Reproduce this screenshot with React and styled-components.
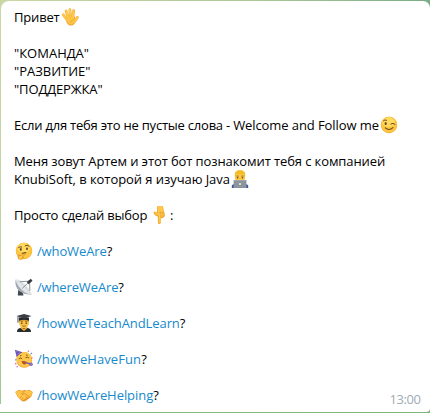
import React from "react";
import styled, { createGlobalStyle } from "styled-components";

const GlobalStyle = createGlobalStyle`
  * { box-sizing: border-box; }
  body { margin: 0; overflow: hidden; }
`;

const Chat = styled.main`
  width: 430px;
  height: 413px;
  padding: 1px 0 1px 1px;
  background:
    linear-gradient(to right, #8fbb8a, #80b37e) bottom / 100% 5px no-repeat,
    linear-gradient(to right, #cbd6a6, #abc796 60%, #78ad86) top / 100% 9px no-repeat,
    linear-gradient(#cbd7a8, #c0d3a5 65%, #9cc491);
`;

const Bubble = styled.article`
  position: relative;
  height: 411px;
  padding: 7px 10px 0 13px;
  border-radius: 8px 7px 4px 0;
  background: #fff;
  color: #000;
  font: 13px/18px "Open Sans", "Noto Sans", sans-serif;

  &::after {
    content: "";
    position: absolute;
    left: -1px;
    bottom: 0;
    width: 1px;
    height: 8px;
    background: #fff;
  }
`;

const Line = styled.p`
  margin: 0;
  height: 18px;
  white-space: pre;
  letter-spacing: ${(p) => p.$track || 0}px;
`;

const Phrase = styled.span`
  letter-spacing: ${(p) => p.$track || 0}px;
`;

const Paragraph = styled.section`
  margin-bottom: 18px;
`;

const Command = styled.a`
  color: #168acd;
  text-decoration: none;
  letter-spacing: ${(p) => p.$track || 0}px;
`;

const Time = styled.time`
  position: absolute;
  right: 9.5px;
  bottom: 4px;
  color: #a0acb6;
  font-size: 13px;
  line-height: 18px;
  letter-spacing: -0.45px;
`;

const Glyph = styled.svg`
  width: 18px;
  height: 18px;
  margin: 0 0.5px 0 1px;
  vertical-align: top;
  overflow: visible;
`;

const Face = () => (
  <>
    <circle cx="9" cy="9" r="8.2" fill="#f5a52e" />
    <circle cx="9" cy="8.6" r="7.9" fill="#fbc640" />
    <ellipse cx="8.5" cy="6.2" rx="6.2" ry="4.7" fill="#ffdc60" />
  </>
);

const drawings = {
  hand: (
    <>
      <path d="M5 9.5 13 7.5 14.8 11Q14.4 17.8 9.6 17.6 6.8 17.3 5.2 13.5Z" fill="#f0a530" />
      <g fill="none" stroke="#efa531" strokeWidth="2.7" strokeLinecap="round">
        <path d="M5.8 11.5 2.2 6.8M7.3 9.5 5 3M9.5 9 8.9 1.6M11.7 9.5 12.7 2.6M13.3 13.8 16.4 9.4" />
      </g>
      <g fill="none" stroke="#ffc94a" strokeWidth="2" strokeLinecap="round">
        <path d="M5.8 11.5 2.3 6.9M7.3 9.5 5.1 3.1M9.5 9 8.9 1.7M11.7 9.5 12.6 2.7M12.8 13.8 16.2 9.6" />
      </g>
      <path d="M5.4 10 12.7 8.6 13.6 12Q12.8 16.7 9.6 16.5 7 16 5.4 12Z" fill="#ffc646" />
      <path d="M9.4 14.8Q10 12 12.8 11.8" stroke="#e99c29" fill="none" strokeWidth=".7" />
    </>
  ),
  wink: (
    <>
      <Face />
      <g fill="none" stroke="#74451d" strokeLinecap="round">
        <path d="M3.4 4.8Q4.8 3.2 6.6 4.2M10.8 8Q13 6.4 15 8.2" strokeWidth="1" />
        <path d="M5.3 11.8Q9 15.2 13 11.6" strokeWidth="1.1" />
      </g>
      <ellipse cx="5.7" cy="7.6" rx="1.1" ry="1.5" fill="#74451d" />
    </>
  ),
  coder: (
    <>
      <path d="M.8 18v-2.2q.2-1.3 1.9-1.6h12.6q1.6.3 1.9 1.6V18Z" fill="#3956a8" />
      <path d="M4 9V4Q4.4.4 9 .3T14 4v5Q13.2 13 9 13T4 9Z" fill="#fac745" />
      <path d="M3.8 7V3.8Q4.5.2 9 .2t5.2 3.6V7L12.6 4H5.4Z" fill="#f3bd28" />
      <path d="M5.3 6.1h2.3M10.4 6.1h2.3" stroke="#9a671c" strokeWidth=".9" />
      <circle cx="6.6" cy="7.8" r=".8" fill="#63421b" />
      <circle cx="11.4" cy="7.8" r=".8" fill="#63421b" />
      <path d="M2.6 10h12.8v8H2.6Z" fill="#8d959c" />
      <path d="M2.6 10h12.8v.8H2.6Z" fill="#a5abb0" />
      <circle cx="9" cy="14" r="1" fill="#eceff0" />
    </>
  ),
  down: (
    <>
      <path d="M6.2.2h5.8l.7 4.6 1.2 3.5q.1 3.2-1.8 3.1-.8 1.2-2.3.5v4.6q-.2 1.7-1.5 1.6-1.3-.1-1.4-1.7V10.7L4.1 9.2Q2.4 7.5 2.6 5.9q.7-1 2.4.2l.9.4Z" fill="#eda42e" />
      <path d="M6.6.3h4.9l.5 5 1 3.2q-.1 1.9-1.2 1.8-.9 1.1-2.2.3v5.7q-.3.9-1 .9-.8-.2-.9-1.3V9.7L4.6 8.3 3.2 6.2q.7-.5 1.7.3l2 1.2Z" fill="#ffc84b" />
      <path d="M8 7.1 9.8 6v5M9.9 6.3l1.8-.2.3 4.5" stroke="#e99c2c" strokeWidth=".7" fill="none" />
    </>
  ),
  think: (
    <>
      <Face />
      <g fill="none" stroke="#70431c" strokeLinecap="round">
        <path d="M3.5 5.5Q5 4.1 6.8 5M10.2 3.7Q12.3 2.3 14 4.2" strokeWidth="1" />
        <path d="M7.2 11.2 10.8 10.6" strokeWidth="1.1" />
      </g>
      <ellipse cx="5.8" cy="7.4" rx="1" ry="1.3" fill="#70431c" />
      <ellipse cx="12" cy="6.7" rx="1" ry="1.3" fill="#70431c" />
      <path d="M3.3 17.3 2.5 14.4q-.1-2 1.6-2.2l.9 1 4.6-1.5q1.3.4.4 1.4l-2 1q1.5.3.7 1.5-.8 2.3-3 2.2Z" fill="#e59b2a" />
      <path d="m3.6 13 .9 1.4 4.8-1.8-2.2 1.8-.1 1.6-1.5 1-1.4-.3Z" fill="#ffcf52" />
    </>
  ),
  dish: (
    <>
      <path d="M2.8 17.4 3.2 12l4.5 2.5.8 2.9Z" fill="#41484f" />
      <path d="M.6 1.4Q-.6 8.5 4.4 13q5.4 4.3 12.6 3.4Z" fill="#a3aab1" />
      <path d="M.6 1.4Q3.4.2 9 5.3t8 11.1Q11.5 16.6 6.5 11.5T.6 1.4Z" fill="#e4e7ea" />
      <path d="M2.1 3.3Q4.5 3.2 8.5 7t6.6 8" stroke="#c5cbd0" strokeWidth=".8" fill="none" />
      <path d="m7.3 10.3 7-6.5M5 3.7l9.1-.5M14.6 4.3l.3 8.5" stroke="#62686f" strokeWidth=".7" fill="none" />
      <path d="m11.8 4.1 4-3.4 1.7 2-3.8 3.6Z" fill="#363b41" />
    </>
  ),
  student: (
    <>
      <path d="M2 18q0-3.8 4.1-4.3h5.8Q16 14.1 16 18Z" fill="#282c31" />
      <path d="m6.4 12 2.6 3 2.6-3 .8 2.2L9 17l-3.4-2.7Z" fill="#f1a92d" />
      <path d="M4.1 5.1h9.8v4.1Q13.3 14 9 14T4.1 9.2Z" fill="#fbc342" />
      <path d="M4 5h10v3l-1.3-1.5H5.3L4 8Z" fill="#b77924" />
      <path d="M5.7 7.7h2M10.3 7.7h2" stroke="#6c451b" strokeWidth=".8" />
      <circle cx="6.8" cy="9.2" r=".75" fill="#56391b" />
      <circle cx="11.2" cy="9.2" r=".75" fill="#56391b" />
      <path d="M7.3 11.9q1.7.8 3.4 0" stroke="#8a5420" strokeWidth=".8" fill="none" />
      <path d="M4 3.5h10v3Q9 4.8 4 6.5Z" fill="#23272b" />
      <path d="m1.5 2 7.5-2 7.5 2L9 4.8Z" fill="#3a3e43" />
      <path d="M3 2.7v6" stroke="#30343a" strokeWidth=".9" />
    </>
  ),
  party: (
    <>
      <circle cx="9.2" cy="9.9" r="7.9" fill="#f3a331" />
      <circle cx="9.2" cy="9.5" r="7.5" fill="#fec94a" />
      <path d="M-.1-.3 7.4 2.3Q4.8 3.6 1.6 7Z" fill="#6652b5" />
      <path d="m1 2 2-.8M1.7 4.5l3.3-2" stroke="#9a82db" strokeWidth=".8" />
      <path d="M3.7 8.9q1.6-1.8 3.4-.2M10.5 7.8q1.9-1.5 3.6.2M5 6l1.5-.7M11 5l1.7.3" stroke="#784719" strokeWidth=".9" fill="none" />
      <path d="M6.5 11.3q2.8-.7 5.2.6-.7 3.3-2.9 2.6-1.9-.6-2.3-3.2Z" fill="#b5522d" />
      <path d="m11.2 12.6 4.5 1.5" stroke="#6459b8" strokeWidth="1.5" />
      <circle cx="16" cy="14.3" r="1.7" fill="#7357b4" />
      <circle cx="16" cy="14.3" r=".7" fill="#e9a1ba" />
      <g strokeWidth="1.1" fill="none">
        <path d="m12.8.8 1.3.8M.2 13.2l1.1 1.1" stroke="#e35b72" />
        <path d="m16.9 3-1.2 1M.2 10.2l1.1-.8" stroke="#5b8cda" />
        <path d="m17.4 7.5-.8 1M1.5 17l1.3-.6" stroke="#bf62b5" />
      </g>
    </>
  ),
  shake: (
    <>
      <path d="M.2 6 4 3.7l3.2 1.1 2-.7 3.1.5 2-.9L17.8 6l-1.6 4.8-4.8 3.7-2.2 1-2.1-.3-4.4-4.3Z" fill="#e89b2b" />
      <path d="m.7 6.2 3.4-1.6 3.3 1.1 2.2-.8 5-.2 2.6 1.6-1.9 4.1-2.4.5-5.6 3.7-3.5-3-1.2-1.9Z" fill="#ffc448" />
      <path d="m9.6 5-3 3q1.3 1.2 3.1-.5l4.6 3.2M5 12l1.7-1.6M6.5 13.5l1.8-1.6M8.3 14.5l1.4-1.3M10.5 10.5l2 1.8" fill="none" stroke="#d58627" strokeWidth=".8" />
    </>
  ),
};

const Emoji = ({ name }) => (
  <Glyph viewBox="0 0 18 18" aria-hidden="true">{drawings[name]}</Glyph>
);

const commands = [
  ["think", "/whoWeAre", -0.1],
  ["dish", "/whereWeAre", -0.13],
  ["student", "/howWeTeachAndLearn", -0.09],
  ["party", "/howWeHaveFun", 0.08],
  ["shake", "/howWeAreHelping", -0.06],
];

export default function App() {
  return (
    <>
      <GlobalStyle />
      <Chat>
        <Bubble>
          <Paragraph><Line $track={-0.17}>Привет<Emoji name="hand" /></Line></Paragraph>
          <Paragraph>
            <Line>"КОМАНДА"</Line>
            <Line>"РАЗВИТИЕ"</Line>
            <Line $track={-0.12}>"ПОДДЕРЖКА"</Line>
          </Paragraph>
          <Paragraph>
            <Line>
              <Phrase $track={-0.22}>Если для тебя это не пустые слова - </Phrase>
              <Phrase $track={-0.09}>Welcome and Follow me</Phrase>
              <Emoji name="wink" />
            </Line>
          </Paragraph>
          <Paragraph>
            <Line $track={-0.1}>Меня зовут Артем и этот бот познакомит тебя с компанией</Line>
            <Line $track={-0.06}>KnubiSoft, в которой я изучаю Java<Emoji name="coder" /></Line>
          </Paragraph>
          <Paragraph><Line $track={-0.2}>Просто сделай выбор <Emoji name="down" />:</Line></Paragraph>
          {commands.map(([icon, text, track]) => (
            <Paragraph key={text}>
              <Line><Emoji name={icon} /> <Command $track={track}>{text}</Command>?</Line>
            </Paragraph>
          ))}
          <Time>13:00</Time>
        </Bubble>
      </Chat>
    </>
  );
}
